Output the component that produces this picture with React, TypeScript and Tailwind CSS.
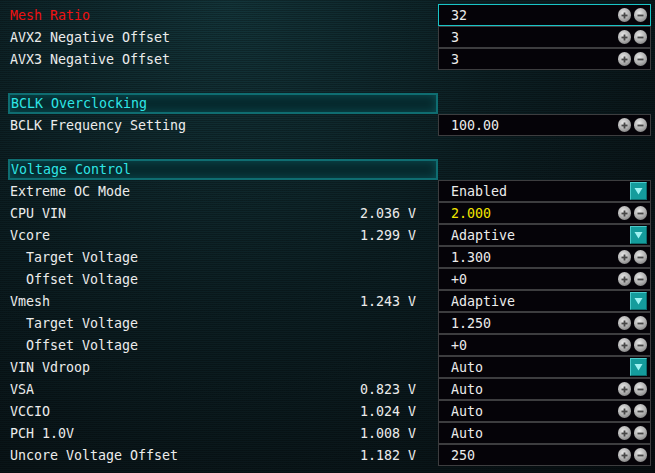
import React from "react";

type Row =
  | { kind: "blank" }
  | { kind: "header"; label: string }
  | {
      kind: "num" | "drop";
      label: string;
      indent?: boolean;
      labelColor?: string;
      reading?: string;
      value: string;
      valueColor?: string;
      active?: boolean;
    };

const rows: Row[] = [
  { kind: "num", label: "Mesh Ratio", labelColor: "text-[#ee1111]", value: "32", active: true },
  { kind: "num", label: "AVX2 Negative Offset", value: "3" },
  { kind: "num", label: "AVX3 Negative Offset", value: "3" },
  { kind: "blank" },
  { kind: "header", label: "BCLK Overclocking" },
  { kind: "num", label: "BCLK Frequency Setting", value: "100.00" },
  { kind: "blank" },
  { kind: "header", label: "Voltage Control" },
  { kind: "drop", label: "Extreme OC Mode", value: "Enabled" },
  { kind: "num", label: "CPU VIN", reading: "2.036 V", value: "2.000", valueColor: "text-[#f2e600]" },
  { kind: "drop", label: "Vcore", reading: "1.299 V", value: "Adaptive" },
  { kind: "num", label: "Target Voltage", indent: true, value: "1.300" },
  { kind: "num", label: "Offset Voltage", indent: true, value: "+0" },
  { kind: "drop", label: "Vmesh", reading: "1.243 V", value: "Adaptive" },
  { kind: "num", label: "Target Voltage", indent: true, value: "1.250" },
  { kind: "num", label: "Offset Voltage", indent: true, value: "+0" },
  { kind: "drop", label: "VIN Vdroop", value: "Auto" },
  { kind: "num", label: "VSA", reading: "0.823 V", value: "Auto" },
  { kind: "num", label: "VCCIO", reading: "1.024 V", value: "Auto" },
  { kind: "num", label: "PCH 1.0V", reading: "1.008 V", value: "Auto" },
  { kind: "num", label: "Uncore Voltage Offset", reading: "1.182 V", value: "250" },
];

function RoundBtn({ minus }: { minus?: boolean }) {
  return (
    <div className="w-[13px] h-[14px] rounded-full bg-[radial-gradient(circle_at_40%_35%,#e8e8e8_0%,#aaaaaa_55%,#666666_100%)] flex items-center justify-center">
      <svg width="9" height="9" viewBox="0 0 9 9">
        <rect x="1.5" y="3.6" width="6" height="1.8" fill="#474747" />
        {!minus && <rect x="3.6" y="1.5" width="1.8" height="6" fill="#474747" />}
      </svg>
    </div>
  );
}

function DropBtn() {
  return (
    <div className="w-[17px] h-[18px] bg-[#149c9c] border border-t-[#4ccaca] border-l-[#4ccaca] border-r-[#0b6d6d] border-b-[#0b6d6d] flex items-center justify-center">
      <svg width="9" height="8" viewBox="0 0 9 8">
        <polygon points="0.5,1 8.5,1 4.5,7.5" fill="#9ef3f3" />
      </svg>
    </div>
  );
}

export default function App() {
  return (
    <div
      className="w-[655px] h-[473px] overflow-hidden pt-[4px] text-[#ececec] text-[13.3px] leading-none bg-[image:repeating-linear-gradient(to_bottom,rgba(0,0,0,0.25)_0px,rgba(0,0,0,0.25)_1px,transparent_1px,transparent_2px),radial-gradient(ellipse_at_35%_0%,#13353a_0%,#0c1f23_45%,#070d10_100%)]"
      style={{ fontFamily: '"DejaVu Sans Mono", "Liberation Mono", monospace' }}
    >
      <div className="flex flex-col">
        {rows.map((r, i) => {
          if (r.kind === "blank") return <div key={i} className="h-[22px]" />;
          if (r.kind === "header")
            return (
              <div key={i} className="h-[22px] flex items-center">
                <div className="ml-[8px] w-[430px] h-[21px] border-2 border-[#0f6d71] bg-[#06282c] shadow-[inset_0_0_10px_#0a4f54] flex items-center pl-[1px] pt-[2px] text-[#2ee6e6]">
                  {r.label}
                </div>
              </div>
            );
          return (
            <div key={i} className="h-[22px] flex items-center">
              <div className={`flex-1 pt-[2px] ${r.indent ? "pl-[26px]" : "pl-[10px]"} ${r.labelColor ?? ""}`}>
                {r.label}
              </div>
              {r.reading && <div className="mr-[22px] pt-[2px]">{r.reading}</div>}
              <div
                className={`mr-[4px] w-[213px] h-[22px] bg-[#050308] flex items-center pl-[12px] pr-[3px] border ${
                  r.active ? "border-[#19c4c6]" : "border-[#3d3d3f]"
                }`}
              >
                <div className={`flex-1 pt-[2px] ${r.valueColor ?? ""}`}>{r.value}</div>
                {r.kind === "num" ? (
                  <div className="flex gap-[3px] items-center">
                    <RoundBtn />
                    <RoundBtn minus />
                  </div>
                ) : (
                  <DropBtn />
                )}
              </div>
            </div>
          );
        })}
      </div>
    </div>
  );
}
